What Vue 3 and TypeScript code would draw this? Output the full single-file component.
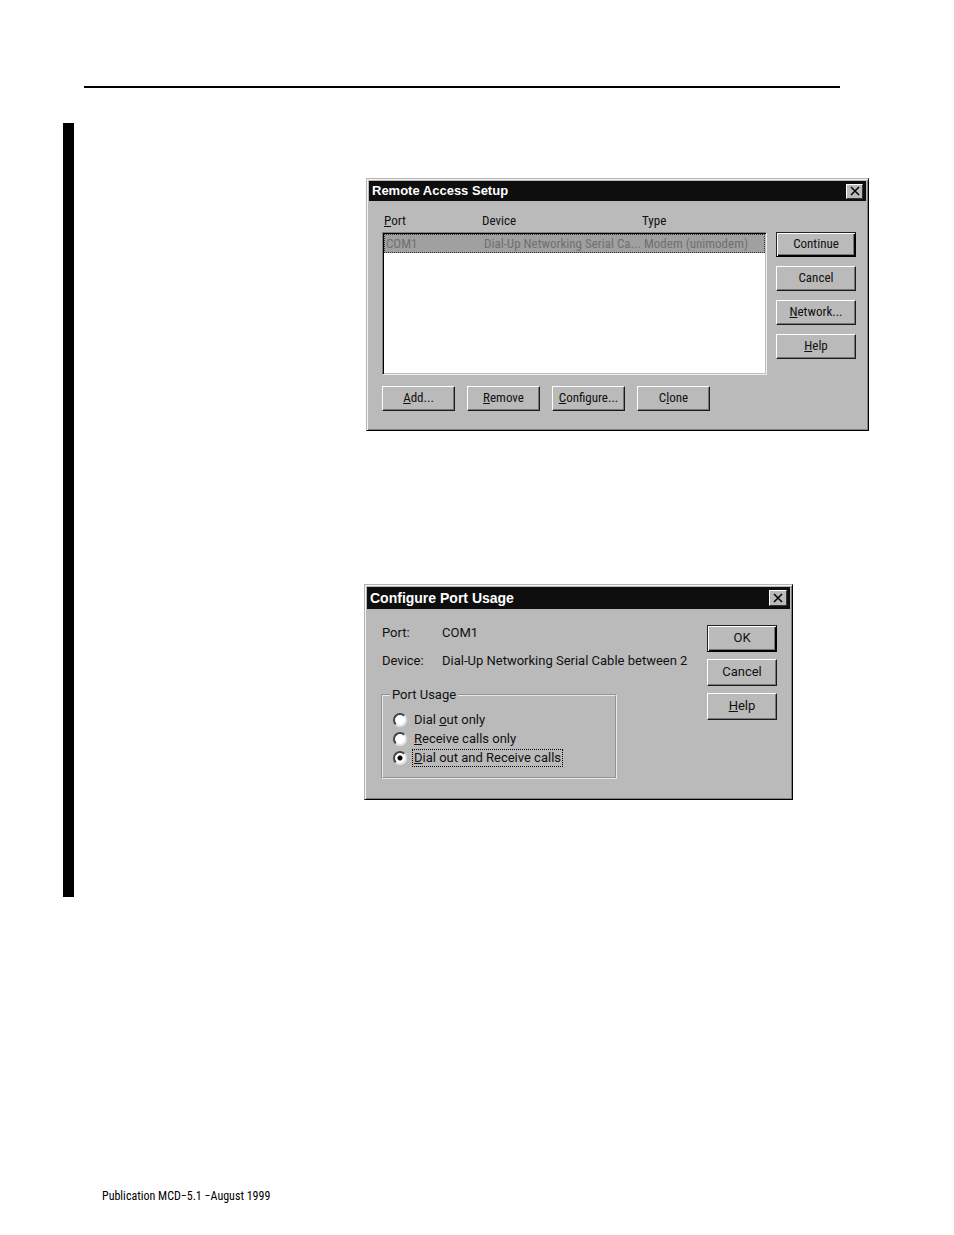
<script setup lang="ts">
import { ref } from 'vue'

interface Caption {
  before?: string
  key?: string
  after?: string
}

const portActions: Caption[] = [
  { key: 'A', after: 'dd...' },
  { key: 'R', after: 'emove' },
  { key: 'C', after: 'onfigure...' },
  { before: 'C', key: 'l', after: 'one' },
]
const setupActions: Caption[] = [
  { before: 'Continue' },
  { before: 'Cancel' },
  { key: 'N', after: 'etwork...' },
  { key: 'H', after: 'elp' },
]
const usageActions: Caption[] = [
  { before: 'OK' },
  { before: 'Cancel' },
  { key: 'H', after: 'elp' },
]
const usageOptions: (Caption & { value: string })[] = [
  { value: 'out', before: 'Dial ', key: 'o', after: 'ut only' },
  { value: 'in', key: 'R', after: 'eceive calls only' },
  { value: 'both', key: 'D', after: 'ial out and Receive calls' },
]
const ports = [{ port: 'COM1', device: 'Dial-Up Networking Serial Ca...', type: 'Modem (unimodem)' }]
const usage = ref('both')
</script>

<template>
  <div class="page">
    <hr class="rule" />
    <main class="revised">
      <section class="dialog setup" aria-labelledby="setup-title">
        <header class="titlebar">
          <h2 id="setup-title">Remote Access Setup</h2>
          <button class="close" type="button" aria-label="Close">
            <svg viewBox="0 0 10 10" width="10" height="10"><path d="M1 1L9 9M9 1L1 9" /></svg>
          </button>
        </header>
        <div class="setup-body">
          <div class="ports">
            <table>
              <thead>
                <tr>
                  <th scope="col"><u>P</u>ort</th>
                  <th scope="col">Device</th>
                  <th scope="col">Type</th>
                </tr>
              </thead>
              <tbody>
                <tr v-for="p in ports" :key="p.port">
                  <td>{{ p.port }}</td>
                  <td>{{ p.device }}</td>
                  <td>{{ p.type }}</td>
                </tr>
              </tbody>
            </table>
            <div class="port-actions">
              <button v-for="(c, i) in portActions" :key="i" class="btn" type="button">
                {{ c.before }}<u v-if="c.key">{{ c.key }}</u>{{ c.after }}
              </button>
            </div>
          </div>
          <div class="stack">
            <button v-for="(c, i) in setupActions" :key="i" class="btn" :class="{ primary: i === 0 }" type="button">
              {{ c.before }}<u v-if="c.key">{{ c.key }}</u>{{ c.after }}
            </button>
          </div>
        </div>
      </section>

      <section class="dialog usage" aria-labelledby="usage-title">
        <header class="titlebar">
          <h2 id="usage-title">Configure Port Usage</h2>
          <button class="close" type="button" aria-label="Close">
            <svg viewBox="0 0 10 10" width="10" height="10"><path d="M1 1L9 9M9 1L1 9" /></svg>
          </button>
        </header>
        <div class="usage-body">
          <div class="details">
            <dl>
              <dt>Port:</dt>
              <dd>COM1</dd>
              <dt>Device:</dt>
              <dd>Dial-Up Networking Serial Cable between 2</dd>
            </dl>
            <fieldset>
              <legend>Port Usage</legend>
              <label v-for="o in usageOptions" :key="o.value" class="option">
                <input v-model="usage" type="radio" name="usage" :value="o.value" />
                <span :class="{ focused: usage === o.value }">{{ o.before }}<u>{{ o.key }}</u>{{ o.after }}</span>
              </label>
            </fieldset>
          </div>
          <div class="stack">
            <button v-for="(c, i) in usageActions" :key="i" class="btn" :class="{ primary: i === 0 }" type="button">
              {{ c.before }}<u v-if="c.key">{{ c.key }}</u>{{ c.after }}
            </button>
          </div>
        </div>
      </section>
    </main>
    <footer>Publication MCD−5.1 −August 1999</footer>
  </div>
</template>

<style>
body {
  background: #fff;
}
</style>

<style scoped>
.page {
  padding: 86px 85px 31px 63px;
  font: 13px/16px Roboto, "Liberation Sans", Arial, sans-serif;
  color: #111;
}
.rule {
  height: 2px;
  margin: 0 29px 0 21px;
  border: 0;
  background: #000;
}
.revised {
  margin-top: 35px;
  padding: 55px 0 97px 290px;
  border-left: 11px solid #000;
}
.dialog {
  padding: 2px;
  border: 1px solid #b4b4b4;
  border-right-color: #000;
  border-bottom-color: #000;
  background: #bababa;
  box-shadow: inset 1px 1px #f4f4f4, inset -1px -1px #808080;
}
.setup {
  margin-left: 2px;
  font-family: "Roboto Condensed", Roboto, sans-serif;
}
.usage {
  margin: 153px 76px 0 0;
}
.titlebar {
  display: flex;
  align-items: center;
  justify-content: space-between;
  height: 20px;
  padding: 0 3px;
  background: #0e0e0e;
  color: #fff;
}
.usage .titlebar {
  height: 22px;
}
h2 {
  margin: 0;
  font: bold 13px/16px "Liberation Sans", Arial, sans-serif;
}
.usage h2 {
  font-size: 14px;
}
.close {
  display: flex;
  align-items: center;
  justify-content: center;
  width: 17px;
  height: 15px;
  padding: 0;
  border: 1px solid #fff;
  border-right-color: #333;
  border-bottom-color: #333;
  background: #bababa;
}
.usage .close {
  width: 18px;
  height: 16px;
}
.close path {
  stroke: #000;
  stroke-width: 1.5;
}
.setup-body {
  display: grid;
  grid-template-columns: 1fr 80px;
  gap: 9px;
  padding: 12px 10px 17px 13px;
}
table {
  display: block;
}
thead,
tbody {
  display: block;
}
tr {
  display: grid;
  grid-template-columns: 98px 160px 1fr;
}
th,
td {
  padding: 0;
  font-weight: normal;
  text-align: left;
  white-space: nowrap;
}
thead {
  height: 19px;
  padding-left: 2px;
}
tbody {
  box-sizing: border-box;
  height: 143px;
  padding: 1px;
  border: 1px solid #808080;
  border-right-color: #eee;
  border-bottom-color: #eee;
  background: #fff;
  box-shadow: inset 1px 1px #000, inset -1px -1px #c0c0c0;
}
tbody tr {
  padding-left: 1px;
  border: 1px dotted #333;
  background: #a0a0a0;
  color: #707070;
  line-height: 17px;
}
.port-actions {
  display: flex;
  gap: 12px;
  margin-top: 11px;
}
.port-actions .btn {
  width: 73px;
}
.stack {
  display: flex;
  flex-direction: column;
}
.setup .stack {
  gap: 9px;
  padding-top: 19px;
}
.btn {
  height: 25px;
  padding: 0 0 1px;
  border: 1px solid #fff;
  border-right-color: #1a1a1a;
  border-bottom-color: #1a1a1a;
  background: #bababa;
  box-shadow: inset -1px -1px #777;
  color: #111;
  font: inherit;
}
.btn.primary {
  border-color: #222;
  border-right-color: #000;
  border-bottom-color: #000;
  box-shadow: inset 1px 1px #fff, inset -1px -1px #000, inset -2px -2px #777;
}
.usage-body {
  display: grid;
  grid-template-columns: 1fr 70px;
  gap: 12px;
  padding: 16px 13px 18px 14px;
}
.usage .stack {
  gap: 7px;
}
.usage .btn {
  height: 27px;
}
dl {
  display: grid;
  grid-template-columns: 60px 1fr;
  row-gap: 12px;
  margin: 0;
  padding-left: 1px;
  white-space: nowrap;
}
dd {
  margin: 0;
}
fieldset {
  width: 236px;
  box-sizing: border-box;
  margin: 18px 0 0;
  padding: 7px 10px 10px;
  border: 2px groove #e8e8e8;
}
legend {
  padding: 0 2px;
  margin-left: -3px;
}
.option {
  display: flex;
  align-items: center;
  gap: 5px;
  height: 19px;
}
.option span {
  padding: 0 1px;
  border: 1px solid transparent;
}
.option span.focused {
  border: 1px dotted #000;
}
input {
  appearance: none;
  width: 14px;
  height: 14px;
  margin: 0;
  border: 2px solid #444;
  border-right-color: #e4e4e4;
  border-bottom-color: #e4e4e4;
  border-radius: 50%;
  background: #fff;
}
input:checked {
  background: radial-gradient(circle, #000 2px, #fff 3px);
}
footer {
  margin: 291px 0 0 39px;
  font: 12px/16px "Roboto Condensed", Roboto, sans-serif;
  color: #000;
}
</style>
